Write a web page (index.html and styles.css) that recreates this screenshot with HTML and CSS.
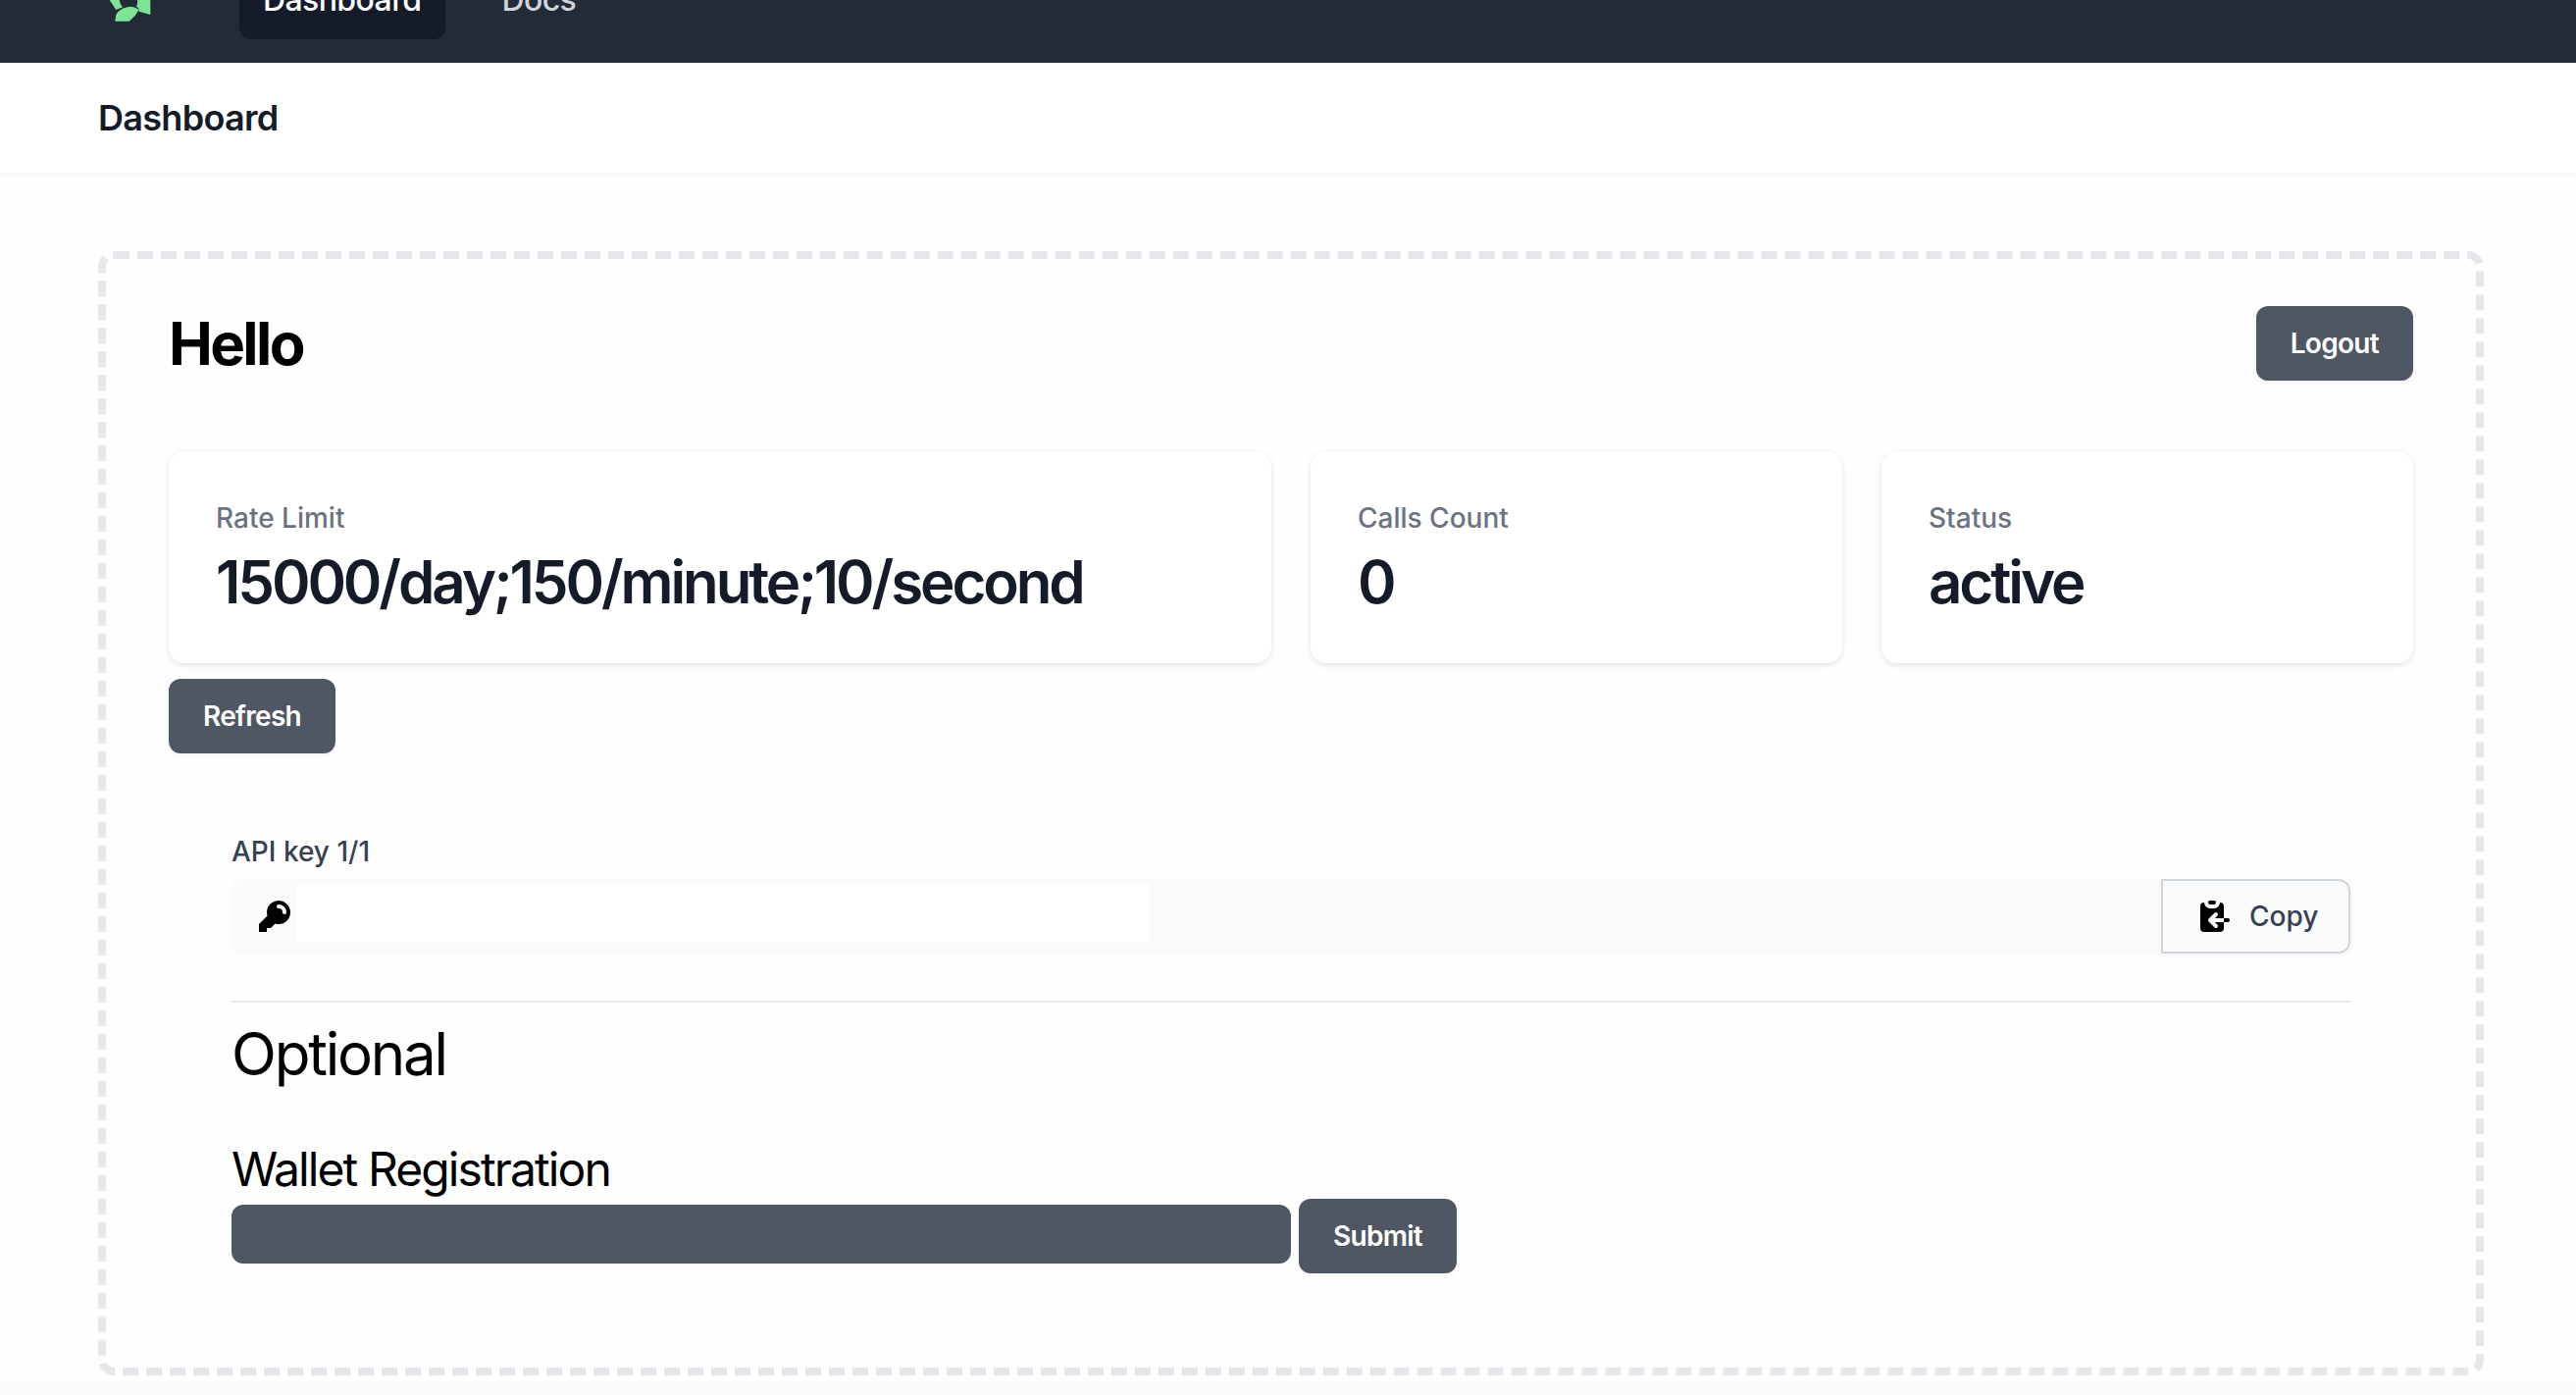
FILE: index.html
```html
<!DOCTYPE html>
<html lang="en">
<head>
<meta charset="utf-8">
<title>Dashboard</title>
<link rel="stylesheet" href="styles.css">
</head>
<body>
<nav class="nav">
  <svg class="logo" viewBox="-11 0 64 44" width="64" height="44" aria-hidden="true">
    <path d="M6.3 43.7L7.3 37Q12 29 22.3 28.7Q27 29 30.7 32Q27 39 20.7 43.7Z"/>
    <path d="M29 22L42.3 22L42.3 37L30.7 33.7Q31 30 28 28.7Q30 25 29 22Z"/>
    <path d="M0.7 22L7.3 32L14 29.3Q11 26 10.7 22Z"/>
    <path d="M14 0L30 0L26 14Q21 11 16 14Z"/>
    <path d="M0.7 22L7 8L14 14L10.7 22Z"/>
    <path d="M29 22L30 14L37 6L42.3 22Z"/>
  </svg>
  <div class="nav-links">
    <a class="nav-link nav-link-active">Dashboard</a>
    <a class="nav-link">Docs</a>
  </div>
</nav>
<header class="page-header">
  <h1 class="page-title">Dashboard</h1>
</header>
<main class="main">
  <div class="panel">
    <div class="hello-row">
      <h2 class="hello">Hello</h2>
      <button class="btn">Logout</button>
    </div>
    <div class="stats">
      <div class="card">
        <div class="card-label">Rate Limit</div>
        <div class="card-value">15000/day;150/minute;10/second</div>
      </div>
      <div class="card">
        <div class="card-label">Calls Count</div>
        <div class="card-value">0</div>
      </div>
      <div class="card">
        <div class="card-label">Status</div>
        <div class="card-value">active</div>
      </div>
    </div>
    <button class="btn btn-refresh">Refresh</button>
    <section class="keys">
      <label class="key-label">API key 1/1</label>
      <div class="key-row">
        <div class="key-field">
          <svg class="icon" viewBox="0 0 20 20" width="40" height="40" aria-hidden="true"><path fill-rule="evenodd" clip-rule="evenodd" d="M18 8a6 6 0 01-7.743 5.743L10 14l-1 1-1 1H6v2H2v-4l4.257-4.257A6 6 0 1118 8zm-6-4a1 1 0 100 2 2 2 0 012 2 1 1 0 102 0 4 4 0 00-4-4z"/></svg>
          <div class="key-input"></div>
        </div>
        <button class="copy-btn">
          <svg class="icon" viewBox="0 0 20 20" width="40" height="40" aria-hidden="true"><path d="M8 2a1 1 0 000 2h2a1 1 0 100-2H8z"/><path d="M3 5a2 2 0 012-2 3 3 0 003 3h2a3 3 0 003-3 2 2 0 012 2v6h-4.586l1.293-1.293a1 1 0 00-1.414-1.414l-3 3a1 1 0 000 1.414l3 3a1 1 0 001.414-1.414L10.414 13H15v3a2 2 0 01-2 2H5a2 2 0 01-2-2V5zM15 11h2a1 1 0 110 2h-2v-2z"/></svg>
          <span>Copy</span>
        </button>
      </div>
      <hr class="rule">
      <h3 class="optional">Optional</h3>
      <h4 class="wallet">Wallet Registration</h4>
      <div class="wallet-row">
        <div class="wallet-input"></div>
        <button class="btn">Submit</button>
      </div>
    </section>
  </div>
</main>
</body>
</html>
```
FILE: styles.css
```css
* { box-sizing: border-box; }
html, body { margin: 0; padding: 0; }
body {
  background: #fafafa;
  font-family: Inter, "Liberation Sans", sans-serif;
  color: #000;
  overflow: hidden;
}
.nav {
  display: flex;
  align-items: center;
  gap: 80px;
  height: 128px;
  margin-top: -64px;
  padding-left: 100px;
  background: #232a38;
}
.logo { fill: #7de496; flex: none; }
.nav-links { display: flex; gap: 34px; }
.nav-link {
  display: block;
  height: 80px;
  padding: 0 24px;
  border-radius: 12px;
  font-size: 32px;
  font-weight: 500;
  letter-spacing: -0.6px;
  line-height: 80px;
  color: #d1d5db;
}
.nav-link-active { background: #151b28; color: #fff; }
.page-header {
  height: 112px;
  padding-left: 100px;
  display: flex;
  align-items: center;
  background: #fff;
  box-shadow: 0 2px 4px rgba(0, 0, 0, 0.05);
  position: relative;
}
.page-title {
  margin: 0;
  font-size: 36px;
  font-weight: 600;
  letter-spacing: -0.7px;
  color: #151b28;
}
.main {
  background: #fefefe;
  padding: 80px 94px 6px 100px;
}
.panel {
  height: 1146px;
  border: 8px dashed #e5e7eb;
  border-radius: 16px;
  padding: 48px 64px;
}
.hello-row {
  display: flex;
  justify-content: space-between;
  align-items: center;
  height: 76px;
}
.hello {
  margin: 0;
  font-size: 60px;
  font-weight: 700;
  letter-spacing: -2.6px;
  color: #000;
}
.btn {
  height: 76px;
  padding: 0 35px;
  border: 0;
  border-radius: 12px;
  background: #4f5664;
  color: #fff;
  font: 600 28px Inter, sans-serif;
  letter-spacing: -0.7px;
  box-shadow: 0 2px 4px rgba(0, 0, 0, 0.05);
}
.stats {
  display: grid;
  grid-template-columns: 1124fr 542fr 542fr;
  gap: 40px;
  margin-top: 72px;
}
.card {
  height: 216px;
  padding: 48px;
  padding-right: 24px;
  border-radius: 16px;
  background: #fff;
  box-shadow: 0 2px 6px rgba(0, 0, 0, 0.1), 0 0 2px rgba(0, 0, 0, 0.03);
}
.card-label {
  font-size: 28px;
  font-weight: 500;
  line-height: 40px;
  color: #6b7280;
}
.card-value {
  font-size: 60px;
  font-weight: 600;
  line-height: 90px;
  letter-spacing: -3.1px;
  color: #151b28;
}
.btn-refresh { display: block; margin-top: 16px; }
.keys { margin: 80px 64px 0; }
.key-label {
  display: block;
  font-size: 28px;
  font-weight: 500;
  line-height: 40px;
  color: #374151;
}
.key-row { display: flex; height: 76px; margin-top: 8px; }
.key-field {
  flex: 1;
  display: flex;
  padding: 4px 0 12px 24px;
  background: #fafafa;
  border-radius: 12px 0 0 12px;
  box-shadow: 0 2px 4px rgba(0, 0, 0, 0.02);
}
.icon { flex: none; margin-top: 14px; fill: #000; }
.key-input {
  width: 869px;
  height: 60px;
  margin-left: 3px;
  background: #fff;
}
.copy-btn {
  display: flex;
  align-items: center;
  gap: 16px;
  width: 193px;
  height: 76px;
  padding: 0 32px;
  border: 2px solid #d1d5db;
  border-radius: 0 12px 12px 0;
  background: #f9fafb;
  color: #374151;
  font: 500 28px Inter, sans-serif;
  box-shadow: 0 2px 4px rgba(0, 0, 0, 0.05);
}
.copy-btn .icon { margin-top: 0; }
.rule {
  height: 2px;
  margin: 48px 0 0;
  border: 0;
  background: #e5e7eb;
}
.optional {
  margin: 16px 0 0;
  font-size: 60px;
  font-weight: 400;
  letter-spacing: -2.2px;
  line-height: 72px;
}
.wallet {
  margin: 52px 0 0;
  font-size: 48px;
  font-weight: 400;
  letter-spacing: -1.9px;
  line-height: 60px;
}
.wallet-row { display: flex; align-items: flex-start; gap: 8px; }
.wallet-input {
  width: 1080px;
  height: 60px;
  margin-top: 6px;
  border-radius: 12px;
  background: #4f5664;
}
```
